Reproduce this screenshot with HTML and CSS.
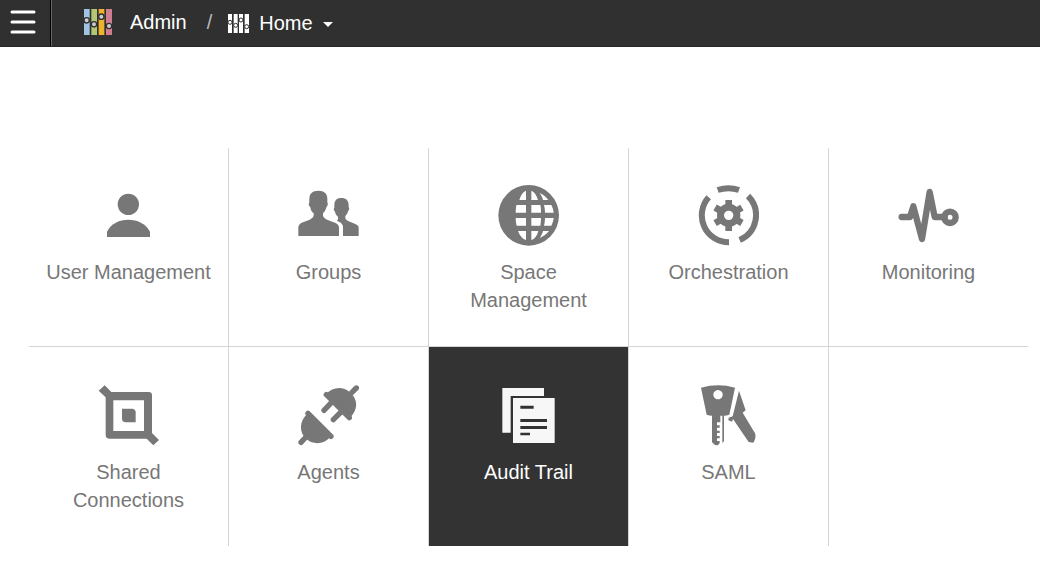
FILE: index.html
```html
<!DOCTYPE html>
<html lang="en">
<head>
<meta charset="utf-8">
<title>Admin - Home</title>
<link rel="stylesheet" href="styles.css">
</head>
<body>
<header class="topbar">
  <button class="menu-button" type="button" aria-label="Menu">
    <svg width="26" height="24" viewBox="0 0 26 24" aria-hidden="true"><path d="M2 2h22M2 12h22M2 22h22" stroke="#fff" stroke-width="3" stroke-linecap="round"/></svg>
  </button>
  <nav class="breadcrumb" aria-label="Breadcrumb">
    <a class="crumb crumb-admin" href="#">
      <svg width="28" height="26" viewBox="252 27 84 78" aria-hidden="true">
        <path fill="#9fc5e3" d="M252 27h17v78h-17z"/><path fill="#b2c673" d="M274 27h17v78h-17z"/><path fill="#ecb32b" d="M296 27h17v78h-17z"/><path fill="#cf7d91" d="M318 27h18v78h-18z"/>
        <g fill="#ccc" stroke="#303030" stroke-width="4"><circle cx="260" cy="61" r="8"/><circle cx="282" cy="73" r="8"/><circle cx="304" cy="50" r="8"/><circle cx="327" cy="78" r="8"/></g>
      </svg>
      <span>Admin</span>
    </a>
    <span class="slash">/</span>
    <button class="crumb crumb-home" type="button" aria-haspopup="true">
      <svg width="21" height="19" viewBox="684 39 63 57" aria-hidden="true">
        <path fill="#fff" d="M684 39h12v57h-12zM701 39h12v57h-12zM717 39h12v57h-12zM734 39h13v57h-13z"/>
        <g fill="#fff" stroke="#303030" stroke-width="3"><circle cx="690" cy="64" r="6"/><circle cx="707" cy="73" r="6"/><circle cx="723" cy="57" r="6"/><circle cx="740" cy="77" r="6"/></g>
      </svg>
      <span>Home</span>
      <svg class="caret" width="10" height="5" viewBox="0 0 10 5" aria-hidden="true"><path fill="#fff" d="M0 0h10L5 5z"/></svg>
    </button>
  </nav>
</header>
<main class="launcher">
  <a class="tile" href="#">
    <svg class="icon" viewBox="24 30 183 183" aria-hidden="true"><circle cx="115" cy="88" r="32"/><path d="M51 186v-16C64 145 88 134 115 134s51 11 65 36v16z"/></svg>
    <span>User Management</span>
  </a>
  <a class="tile" href="#">
    <svg class="icon" viewBox="24 30 183 183" aria-hidden="true"><path d="M85 47c18 0 27 9 27 25v10c3 4 1 12-3 15-2 9-6 14-10 18-1 10 2 14 12 19l24 9c9 4 12 8 12 15v25H25v-25c0-7 3-11 10-15l24-9c10-5 13-9 12-19-5-4-9-9-10-18-5-4-6-11-3-15V72c0-16 9-25 27-25z"/><path d="M154 69c14 0 22 8 22 21v7c3 3 2 9-2 12-2 7-4 11-8 14-1 8 1 12 10 16l20 8c8 4 10 7 10 12v24h-47v-26c0-7-3-11-9-15l-10-5c5-2 5-6 3-13-4-3-7-7-8-14-4-3-5-9-2-12v-8c0-13 7-21 21-21z"/></svg>
    <span>Groups</span>
  </a>
  <a class="tile" href="#">
    <svg class="icon" viewBox="54 30 183 183" aria-hidden="true"><circle cx="146" cy="121" r="91"/><path class="cut" d="M138 47v28h-20c4-15 11-24 20-28zM154 47c9 4 16 13 20 28h-20zM109 90h29v23h-31c0-8 1-16 2-23zM154 90h27c2 7 2 15 2 23h-29zM107 129h31v23h-28c-2-7-3-15-3-23zM154 129h29c0 8-1 16-2 23h-27zM114 168h24v27c-10-3-18-12-24-27zM154 168h21c-4 15-11 24-21 27zM178 53c11 5 20 12 27 22h-16c-2-9-6-16-11-22zM192 90h22c4 8 6 15 7 23h-26c0-8-1-16-3-23zM195 129h26c-1 8-3 15-7 23h-22c2-7 3-15 3-23zM189 168h18c-7 9-16 16-28 21 4-6 8-13 10-21z"/></svg>
    <span>Space Management</span>
  </a>
  <a class="tile" href="#">
    <svg class="icon" viewBox="24 30 183 183" aria-hidden="true"><path class="line" stroke-width="18" d="M83 45q33-11 64 0M56 67A81 81 0 0 0 117 202M174 63A81 81 0 0 1 149 195"/><path d="M106 75h20v93h-20z"/><path d="M106 75h20v93h-20z" transform="rotate(60 116 121)"/><path d="M106 75h20v93h-20z" transform="rotate(120 116 121)"/><circle cx="116" cy="121" r="35"/><circle class="cut" cx="116" cy="121" r="14"/></svg>
    <span>Orchestration</span>
  </a>
  <a class="tile" href="#">
    <svg class="icon" viewBox="24 30 183 183" aria-hidden="true"><path class="line" stroke-width="19" stroke-linecap="round" stroke-linejoin="round" d="M35 126h25L70 94l26 98L119 51l15 75h30"/><circle class="line" cx="180" cy="127" r="17" stroke-width="19"/></svg>
    <span>Monitoring</span>
  </a>
  <a class="tile" href="#">
    <svg class="icon" viewBox="24 30 183 183" aria-hidden="true"><path fill-rule="evenodd" d="M44 31l20 20h112q10 0 10 10v113l21 21-17 16-20-20H59q-12 0-12-12V67L26 47zM70 76v92h92V76z"/><path d="M96 101h30q10 0 11 11v30h-30q-11-1-11-11z"/></svg>
    <span>Shared Connections</span>
  </a>
  <a class="tile" href="#">
    <svg class="icon" viewBox="24 30 183 183" aria-hidden="true"><path d="M54 114l69 70C103 208 72 211 50 193 26 172 27 138 54 114zM108 58c20-23 50-25 71-7 26 22 26 52 1 77z"/><path class="line" stroke-width="16" stroke-linecap="round" d="M54 115l69 69M48 186l-15 16M109 59l69 69M185 53l14-14M127 80l-25 26M156 108l-26 26"/></svg>
    <span>Agents</span>
  </a>
  <a class="tile tile-active" href="#" aria-current="page">
    <svg class="icon" viewBox="234 150 183 183" aria-hidden="true"><path d="M247 159h125v24H272v110h-25zM279 189h125v135H279z"/><path class="cut" d="M301 212h40v9h-40zM301 252h80v9h-80zM301 273h80v9h-80zM301 293h29v8h-29z"/></svg>
    <span>Audit Trail</span>
  </a>
  <a class="tile" href="#">
    <svg class="icon" viewBox="24 30 183 183" aria-hidden="true"><path fill-rule="evenodd" d="M33 38q52-14 102 0l-17 81q-8 3-16 3v77l-5 5v-82h-6v20h-10v9h8v7h-8v9h8v7h-8v9h8v7h-8v8h8v7l-6 6-8-1-9-8v-80q-8 0-16-3zM84 45a14 14 0 1 0 .1 0z"/><path d="M147 47l20 59-9 7 37 62c4 10 0 20-5 28l-14-2-47-69-3 8-11-4 1-8 12-4z"/></svg>
    <span>SAML</span>
  </a>
  <div class="tile"></div>
</main>
</body>
</html>
```
FILE: styles.css
```css
* {
  box-sizing: border-box;
}

body {
  margin: 0;
  background: #fff;
  color: #777;
  font-family: "Liberation Sans", Arial, sans-serif;
  font-size: 20px;
  line-height: 28px;
}

a {
  color: inherit;
  text-decoration: none;
}

button {
  padding: 0;
  border: 0;
  background: none;
  color: inherit;
  font: inherit;
  cursor: pointer;
}

svg {
  display: block;
  flex: none;
}

.topbar {
  display: flex;
  height: 47px;
  background: #303030;
  border-bottom: 1px solid #262626;
  color: #fff;
}

.menu-button {
  display: flex;
  align-items: center;
  width: 51px;
  padding: 0 0 2px 10px;
  border-right: 1px solid #000;
}

.breadcrumb {
  display: flex;
  align-items: center;
  padding-left: 32px;
  border-left: 1px solid #666;
}

.crumb {
  display: flex;
  align-items: center;
}

.crumb-admin {
  gap: 18px;
  padding-bottom: 2px;
}

.crumb-home {
  gap: 10px;
}

.slash {
  padding: 0 16px 2px 20px;
  color: #bbb;
}

.caret {
  margin-top: 2px;
}

.launcher {
  display: grid;
  grid-template-columns: repeat(5, 1fr);
  padding: 101px 11px 28px 29px;
}

.tile {
  display: flex;
  flex-direction: column;
  align-items: center;
  gap: 12px;
  min-height: 199px;
  padding: 38px 14px 0;
  border-right: 1px solid #d5d5d5;
  text-align: center;
}

.tile:nth-child(5n) {
  border-right-color: transparent;
}

.tile:nth-child(-n+5) {
  padding-top: 37px;
  border-bottom: 1px solid #d5d5d5;
}

.tile-active {
  background: #333;
  background-clip: padding-box;
  color: #fff;
}

.icon {
  width: 61px;
  height: 61px;
  fill: #777;
}

.icon .cut {
  fill: #fff;
}

.icon .line {
  fill: none;
  stroke: #777;
}

.tile-active .icon {
  fill: #f7f7f7;
}

.tile-active .icon .cut {
  fill: #333;
}
```
